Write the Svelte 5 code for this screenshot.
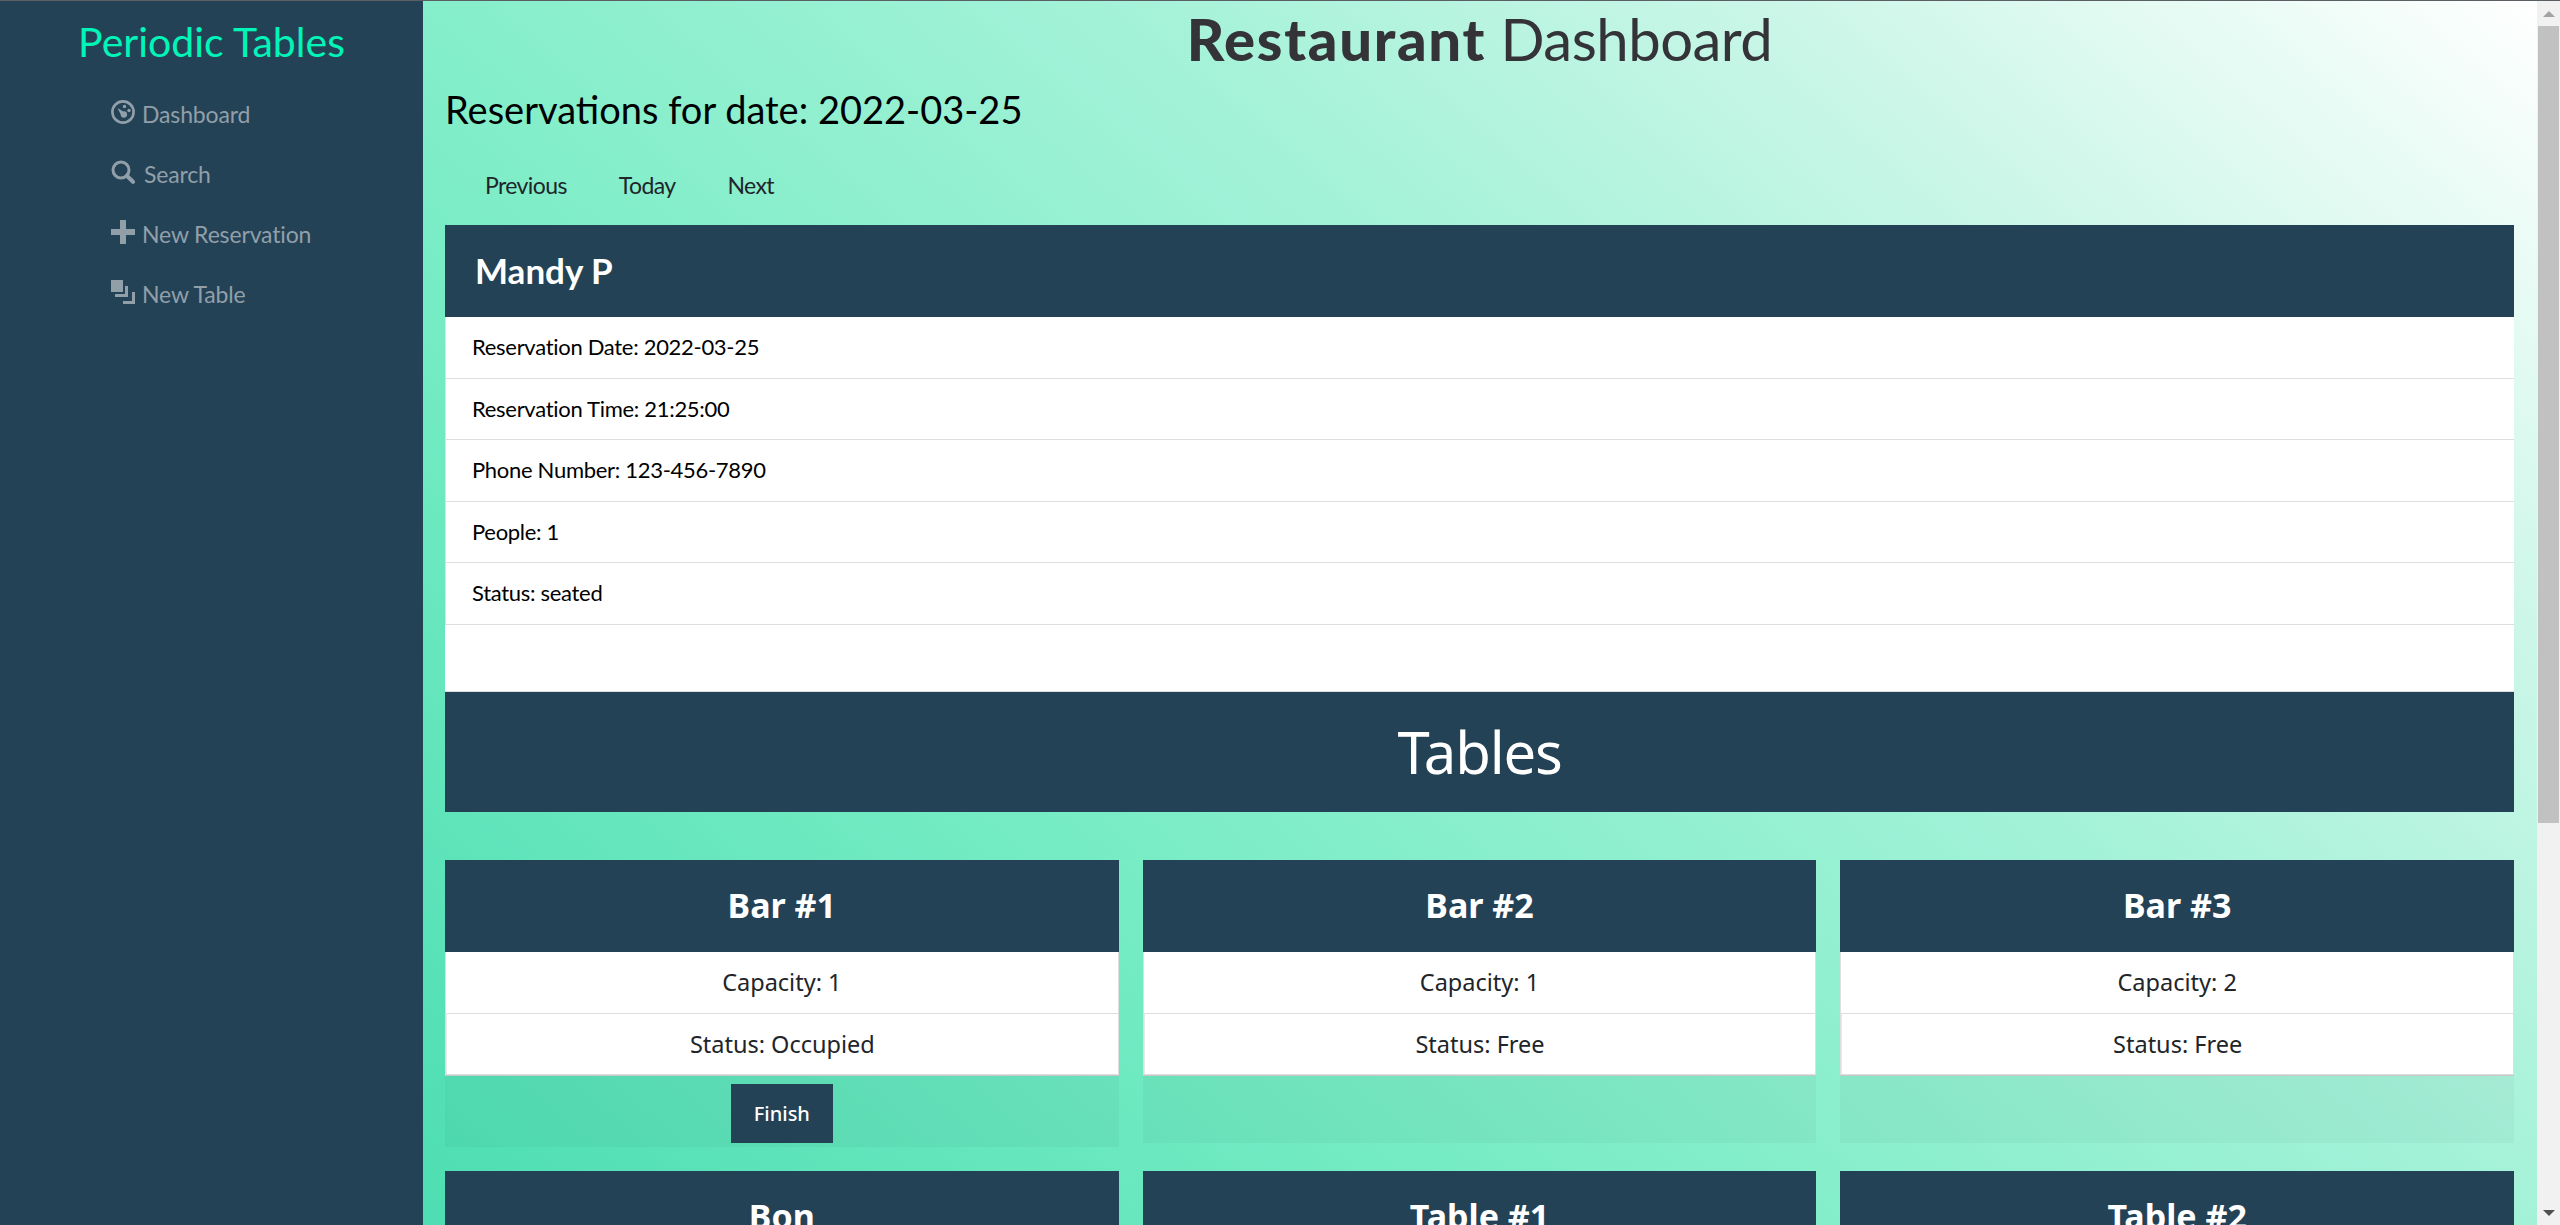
<script>
	const navItems = [
		{ label: 'Dashboard', icon: 'dash' },
		{ label: 'Search', icon: 'search' },
		{ label: 'New Reservation', icon: 'plus' },
		{ label: 'New Table', icon: 'table' }
	];

	const details = [
		'Reservation Date: 2022-03-25',
		'Reservation Time: 21:25:00',
		'Phone Number: 123-456-7890',
		'People: 1',
		'Status: seated'
	];

	const tables = [
		{ name: 'Bar #1', capacity: 1, status: 'Occupied' },
		{ name: 'Bar #2', capacity: 1, status: 'Free' },
		{ name: 'Bar #3', capacity: 2, status: 'Free' },
		{ name: 'Bon', capacity: 3, status: 'Free' },
		{ name: 'Table #1', capacity: 6, status: 'Free' },
		{ name: 'Table #2', capacity: 6, status: 'Free' }
	];
</script>

<div class="page">
	<aside class="sidebar">
		<h1 class="brand">Periodic Tables</h1>
		<nav class="nav">
			{#each navItems as item}
				<a class="nav-link" href="#top">
					<svg class="icon" viewBox="0 0 24 24" aria-hidden="true">
						{#if item.icon === 'dash'}
							<circle cx="12" cy="12" r="10.6" fill="none" stroke="currentColor" stroke-width="2.6" />
							<circle cx="13.5" cy="6.5" r="1.7" fill="currentColor" />
							<circle cx="18" cy="10.5" r="1.7" fill="currentColor" />
							<path d="M6.5 8l5.8 3.4a3.2 3.2 0 1 1-2.6 3.2z" fill="currentColor" />
						{:else if item.icon === 'search'}
							<circle cx="10" cy="10" r="8" fill="none" stroke="currentColor" stroke-width="3" />
							<path d="M15.8 15.8l6.2 6" fill="none" stroke="currentColor" stroke-width="4" stroke-linecap="round" />
						{:else if item.icon === 'plus'}
							<path d="M9 0h6v9h9v6h-9v9H9v-9H0V9h9z" fill="currentColor" />
						{:else}
							<path d="M0 0h12v12H0z" fill="currentColor" />
							<path d="M4 14h10V6h3v11H4z" fill="currentColor" />
							<path d="M12 21h9V12h3v12H12z" fill="currentColor" />
						{/if}
					</svg>
					<span class:gap={item.icon === 'search'}>{item.label}</span>
				</a>
			{/each}
		</nav>
	</aside>

	<main class="main">
		<h1 class="title"><strong>Restaurant</strong> Dashboard</h1>
		<h2 class="date-heading">Reservations for date: 2022-03-25</h2>
		<div class="date-nav">
			<button class="link-btn">Previous</button>
			<button class="link-btn">Today</button>
			<button class="link-btn">Next</button>
		</div>

		<section class="reservation">
			<h3 class="res-name">Mandy P</h3>
			<ul class="res-list">
				{#each details as line}
					<li>{line}</li>
				{/each}
			</ul>
			<div class="res-body"></div>
		</section>

		<h2 class="tables-banner">Tables</h2>

		<div class="table-grid">
			{#each tables as table}
				<article class="table-card">
					<h3 class="table-name">{table.name}</h3>
					<ul class="table-list">
						<li>Capacity: {table.capacity}</li>
						<li>Status: {table.status}</li>
					</ul>
					<div class="table-footer">
						{#if table.status === 'Occupied'}
							<button class="finish">Finish</button>
						{/if}
					</div>
				</article>
			{/each}
		</div>
	</main>

	<div class="scrollbar">
		<div class="arrow up"></div>
		<div class="track"><div class="thumb"></div></div>
		<div class="arrow down"></div>
	</div>
</div>

<style>
	:global(body) {
		margin: 0;
		overflow: hidden;
	}

	.page {
		display: grid;
		grid-template-columns: 423px 1fr 23px;
		height: 1225px;
		overflow: hidden;
		border-top: 1px solid #5a5f63;
		box-sizing: border-box;
		font-family: "Lato", "Noto Sans", sans-serif;
	}

	.sidebar {
		background: #244256;
		min-width: 0;
	}

	.brand {
		margin: 0;
		padding-top: 17px;
		text-align: center;
		font-size: 41px;
		line-height: 48px;
		font-weight: 400;
		color: #00f5b8;
	}

	.nav {
		display: flex;
		flex-direction: column;
		padding: 18px 0 0 111px;
	}

	.nav-link {
		display: flex;
		align-items: center;
		gap: 7px;
		height: 60px;
		font-size: 23px;
		letter-spacing: -0.15px;
		color: #919fa9;
		text-decoration: none;
	}

	.icon {
		width: 24px;
		height: 24px;
		flex: none;
		margin-top: -4px;
	}

	.gap {
		margin-left: 2px;
	}

	.main {
		min-width: 0;
		overflow: hidden;
		padding: 0 23px 0 22px;
		background: linear-gradient(to top right, #3bd6a8 0%, #52dfb4 19.5%, #76ecc4 42%, #a3f2d8 66%, #cbf6e8 82%, #ffffff 100%) no-repeat;
		background-size: 100% 1806px;
	}

	.title {
		margin: 0;
		height: 75px;
		text-align: center;
		font-size: 58px;
		line-height: 75px;
		font-weight: 400;
		letter-spacing: -0.5px;
		color: #343338;
	}

	.title strong {
		font-weight: 900;
		letter-spacing: 1.7px;
	}

	.date-heading {
		margin: 9px 0 0;
		font-size: 38px;
		line-height: 48px;
		font-weight: 400;
		color: #000;
	}

	.date-nav {
		display: flex;
		padding: 28px 0 0 14px;
		height: 92px;
		box-sizing: border-box;
	}

	.link-btn {
		border: 0;
		background: none;
		padding: 0 26px;
		height: 48px;
		font: inherit;
		font-size: 23px;
		letter-spacing: -0.6px;
		color: #212529;
	}

	.reservation {
		background: #fff;
		border-bottom: 1px solid #dedede;
	}

	.res-name,
	.table-name {
		margin: 0;
		height: 92px;
		background: #244256;
		color: #fff;
		font-size: 35px;
		line-height: 90px;
	}

	.res-name {
		padding-left: 30px;
	}

	.res-list,
	.table-list {
		margin: 0;
		padding: 0;
		list-style: none;
		background: #fff;
	}

	.res-list {
		border-left: 1px solid #e0e0e0;
	}

	.res-list li {
		height: 61.6px;
		box-sizing: border-box;
		padding-left: 26px;
		border-bottom: 1px solid #dedede;
		font-size: 22px;
		line-height: 60px;
		letter-spacing: -0.3px;
		color: #000;
	}

	.res-body {
		height: 66px;
	}

	.tables-banner {
		margin: 0;
		height: 120px;
		background: #244256;
		color: #fff;
		text-align: center;
		font-size: 58px;
		line-height: 120px;
		font-weight: 400;
		font-family: "Noto Sans", sans-serif;
		letter-spacing: -1.2px;
	}

	.table-grid {
		display: grid;
		grid-template-columns: repeat(3, 1fr);
		gap: 24px;
		align-items: start;
		padding-top: 48px;
		font-family: "Noto Sans", sans-serif;
	}

	.table-name {
		text-align: center;
		font-size: 34px;
	}

	.table-list {
		border: 1px solid #dedede;
		border-top: 0;
		box-shadow: 0 1px 0 #cfcfcf;
	}

	.table-list li {
		height: 61px;
		box-sizing: border-box;
		text-align: center;
		font-size: 23.5px;
		line-height: 60px;
		color: #212529;
	}

	.table-list li + li {
		border-top: 1px solid #dedede;
		border-left: 1px solid #e8e8e8;
	}

	.table-footer {
		display: flex;
		justify-content: center;
		min-height: 68px;
		padding-top: 9px;
		padding-bottom: 4px;
		box-sizing: border-box;
		background: rgba(0, 0, 0, 0.03);
	}

	.finish {
		width: 102px;
		height: 59px;
		border: 0;
		background: #244256;
		color: #fff;
		font: inherit;
		font-size: 20px;
		font-weight: 500;
	}

	.scrollbar {
		display: flex;
		flex-direction: column;
		background: #f1f1f1;
	}

	.arrow {
		height: 25px;
		flex: none;
		display: flex;
		justify-content: center;
		align-items: center;
	}

	.arrow::after {
		content: "";
		border-left: 6px solid transparent;
		border-right: 6px solid transparent;
	}

	.arrow.up::after {
		border-bottom: 6px solid #a3a3a3;
	}

	.arrow.down::after {
		border-top: 6px solid #505050;
	}

	.track {
		flex: 1;
		padding: 0 1px;
	}

	.thumb {
		height: 797px;
		background: #c1c1c1;
	}
</style>
